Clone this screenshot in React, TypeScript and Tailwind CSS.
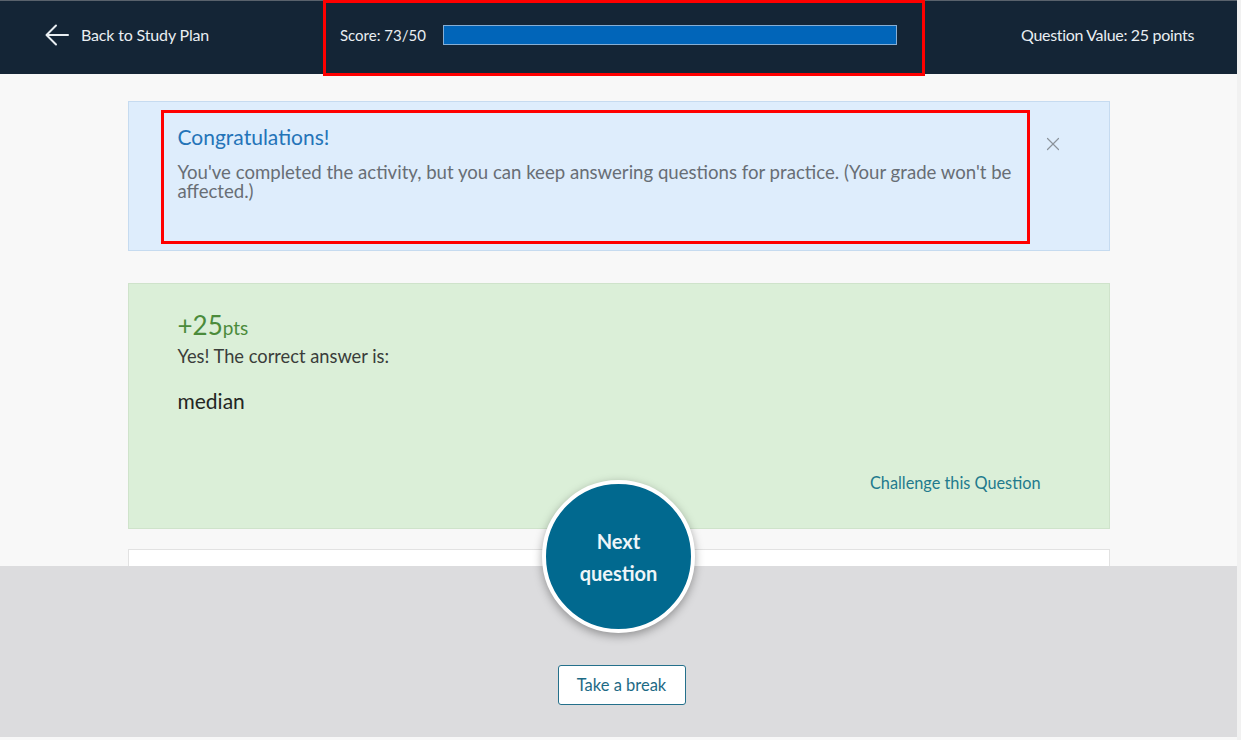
import { X } from "lucide-react";

function BackArrow() {
  return (
    <svg width="24" height="24" viewBox="0 0 24 24" fill="none" stroke="currentColor" strokeWidth="2" strokeLinecap="round" strokeLinejoin="round">
      <path d="M23 12H2" />
      <path d="M11 2.5L1.5 12L11 21.5" />
    </svg>
  );
}

export default function App() {
  return (
    <div className="relative flex h-[740px] w-[1241px] overflow-hidden bg-[#f8f8f8] font-['Lato','Noto_Sans',sans-serif]">
      <div className="flex w-[1237px] flex-col">
        {/* top bar */}
        <header className="flex h-[74px] shrink-0 items-center border-t border-[#59626c] bg-[#142536] pb-[5px] pl-[45px] pr-[43px] text-[#e9eef2]">
          <div className="flex w-[295px] items-center gap-[12px]">
            <BackArrow />
            <span className="text-[16px] tracking-[-0.01em]">Back to Study Plan</span>
          </div>
          <div className="flex items-center">
            <span className="w-[103px] text-[15px]">Score: 73/50</span>
            <div className="h-[20px] w-[454px] border border-[#86aed4] bg-[#0165b9]" />
          </div>
          <span className="ml-auto text-[16px] tracking-[-0.02em]">Question Value: 25 points</span>
        </header>

        {/* content */}
        <main className="flex h-[492px] shrink-0 flex-col overflow-hidden pt-[27px]">
          <section className="mx-auto flex h-[150px] w-[982px] shrink-0 border border-[#c6dbf0] bg-[#deedfc] pl-[49px] pt-[22px]">
            <div className="w-[850px]">
              <h2 className="text-[21px] leading-[26px] text-[#2474b8]">Congratulations!</h2>
              <p className="mt-[13px] text-[18.6px] leading-[19px] text-[#686e75]">
                You've completed the activity, but you can keep answering questions for practice. (Your grade won't be affected.)
              </p>
            </div>
            <button className="ml-[14px] mt-[9px] h-[20px] text-[#8b929a]">
              <X size={22} strokeWidth={1.3} />
            </button>
          </section>

          <section className="mx-auto mt-[32px] flex h-[246px] w-[982px] shrink-0 flex-col border border-[#cfe3cb] bg-[#dbefd8] pl-[49px] pr-[68px] pt-[26px]">
            <p className="text-[#4b8b3b]">
              <span className="text-[26px] leading-[30px]">+25</span>
              <span className="text-[19px]">pts</span>
            </p>
            <p className="mt-[1px] text-[18.3px] leading-[24px] text-[#3a3d3a]">Yes! The correct answer is:</p>
            <p className="mt-[20px] text-[21px] leading-[26px] text-[#232623]">median</p>
            <a className="mt-auto mb-[33px] self-end text-[16.3px] text-[#227a8d]">Challenge this Question</a>
          </section>

          <section className="mx-auto mt-[20px] h-[80px] w-[982px] shrink-0 border border-[#e2e2e2] bg-white" />
        </main>

        {/* footer */}
        <footer className="flex h-[171px] shrink-0 items-end justify-center bg-[#dcdcde] pb-[32px]">
          <button className="ml-[6px] h-[40px] w-[128px] rounded-[3px] border-[1.5px] border-[#24708b] bg-white text-[16.5px] text-[#1d6a85]">
            Take a break
          </button>
        </footer>
      </div>
      <div className="w-[4px] bg-[#f1f1f1]" />

      {/* next question bubble */}
      <button className="absolute left-[542px] top-[480px] flex h-[153px] w-[153px] flex-col items-center justify-center rounded-full border-[4px] border-white bg-[#01698f] text-[20px] font-bold leading-[32px] text-[#eef5f8] shadow-[0_3px_10px_rgba(0,0,0,0.35)]">
        <span>Next</span>
        <span>question</span>
      </button>

      {/* annotation boxes */}
      <div className="pointer-events-none absolute left-[323px] top-0 h-[76px] w-[602px] border-[3px] border-[#ff0000]" />
      <div className="pointer-events-none absolute left-[161px] top-[110px] h-[134px] w-[869px] border-[3px] border-[#ff0000]" />
    </div>
  );
}
